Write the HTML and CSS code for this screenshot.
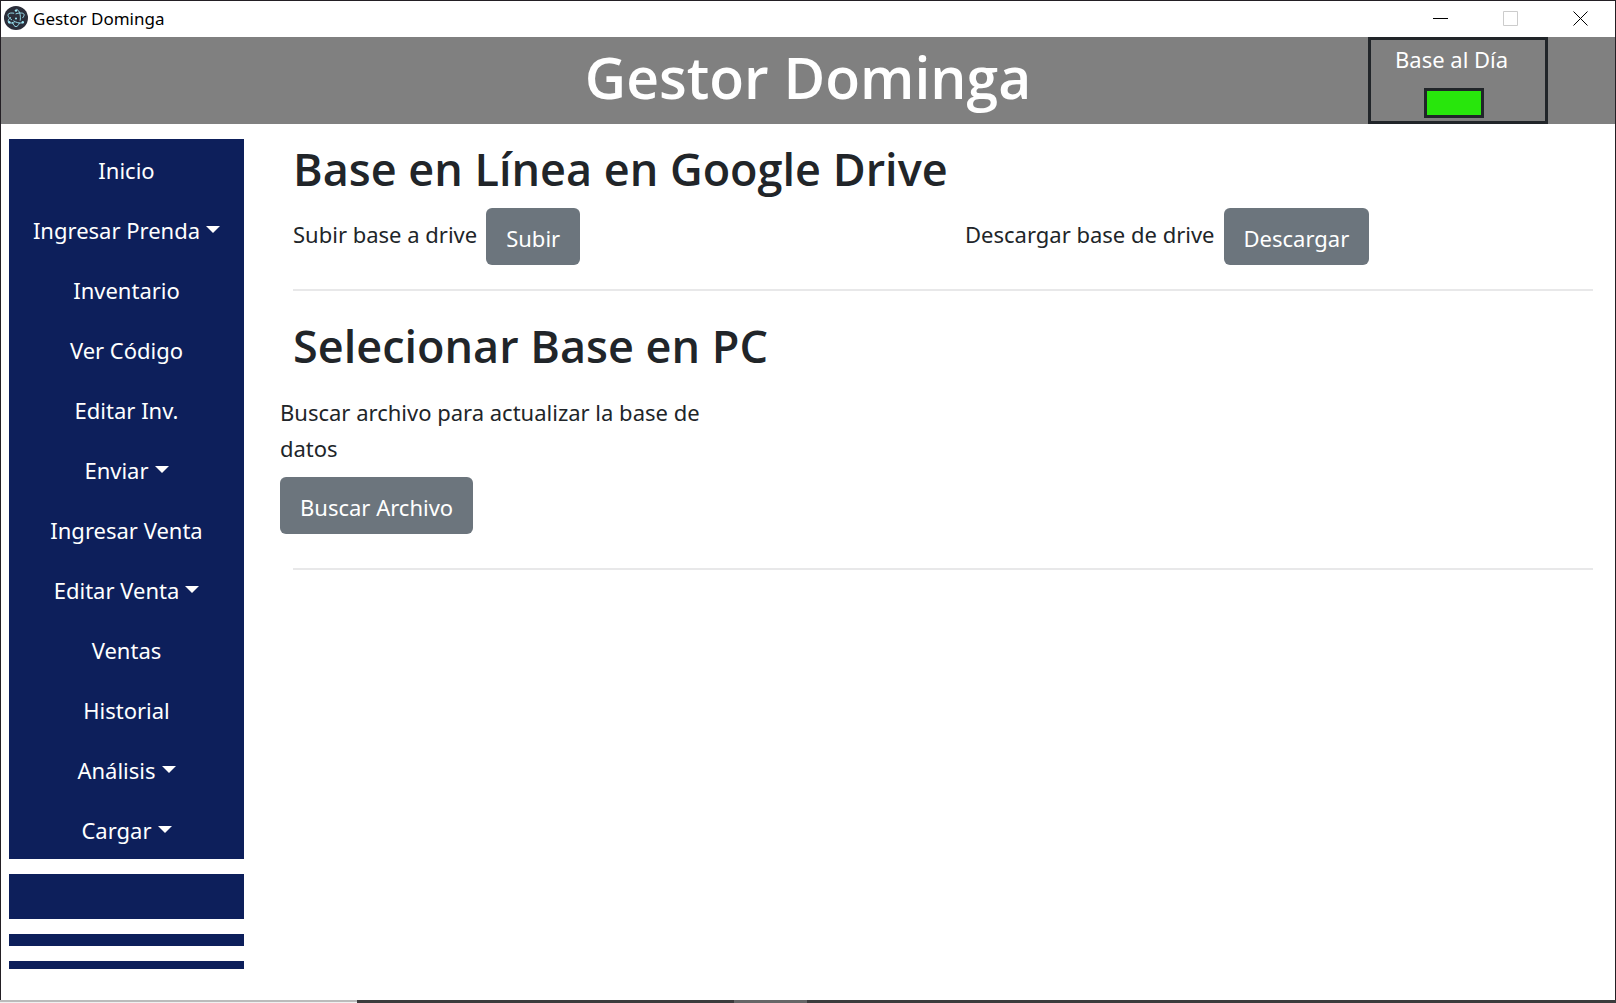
FILE: index.html
```html
<!DOCTYPE html>
<html lang="es">
<head>
<meta charset="utf-8">
<title>Gestor Dominga</title>
<link rel="stylesheet" href="styles.css">
</head>
<body>
<div class="window">
  <div class="titlebar">
    <svg class="app-icon" viewBox="0 0 24 24" aria-hidden="true">
      <circle cx="12" cy="12" r="12" fill="#2b2e3a"/>
      <g fill="none" stroke="#9feaf9" stroke-width="0.9" stroke-linecap="round">
        <path d="M9.800 7.200C7.100 6.700 4.900 7.100 4.200 8.300c-.8 1.400.7 3.600 3.500 5.500"/>
        <path d="M9.700 15c1.200.7 2.600 1.300 3.900 1.600 2.200.6 4.100.6 5.200.1"/>
        <path d="M6.500 11.400c-1.900 1.700-2.800 3.300-2.200 4.500.7 1.200 2.900 1.500 5.700.9"/>
        <path d="M12 7.800c1.400-.5 2.700-.8 3.900-.8 2.200-.1 3.700.3 4.100 1.300.4.900-.1 2.100-1.300 3.500"/>
        <path d="M8.400 16.400C9.300 19 10.600 20.600 12 20.600c1.300 0 2.500-1.300 3.400-3.500"/>
        <path d="M16.200 14.300c.2-.8.200-1.700.2-2.600 0-4.200-1.500-7.700-3.600-8.300"/>
      </g>
      <g fill="#9feaf9">
        <circle cx="12" cy="12.500" r="1"/>
        <circle cx="12" cy="4.600" r="1.200"/>
        <circle cx="5.300" cy="16.200" r="1.200"/>
        <circle cx="18.800" cy="16.200" r="1.200"/>
      </g>
    </svg>
    <span class="titlebar-text">Gestor Dominga</span>
    <div class="window-controls">
      <button type="button" aria-label="Minimizar"><svg viewBox="0 0 15 15"><path d="M0 7.500h15" stroke="#000"/></svg></button>
      <button type="button" aria-label="Maximizar" disabled><svg viewBox="0 0 15 15"><path d="M.5.500h14v14H.5z" stroke="#ccc" fill="none"/></svg></button>
      <button type="button" aria-label="Cerrar"><svg viewBox="0 0 15 15"><path d="M.5.500l14 14M14.500.500l-14 14" stroke="#000"/></svg></button>
    </div>
  </div>

  <header class="header">
    <h1>Gestor Dominga</h1>
    <div class="status">
      <span class="status-label">Base al Día</span>
      <span class="status-light"></span>
    </div>
  </header>

  <div class="layout">
    <aside class="sidebar">
      <nav class="menu">
        <a class="menu-item" href="#">Inicio</a>
        <button class="menu-item dropdown" type="button">Ingresar Prenda</button>
        <a class="menu-item" href="#">Inventario</a>
        <a class="menu-item" href="#">Ver Código</a>
        <a class="menu-item" href="#">Editar Inv.</a>
        <button class="menu-item dropdown" type="button">Enviar</button>
        <a class="menu-item" href="#">Ingresar Venta</a>
        <button class="menu-item dropdown" type="button">Editar Venta</button>
        <a class="menu-item" href="#">Ventas</a>
        <a class="menu-item" href="#">Historial</a>
        <button class="menu-item dropdown" type="button">Análisis</button>
        <button class="menu-item dropdown" type="button">Cargar</button>
      </nav>
      <div class="bar bar-large"></div>
      <div class="bar bar-medium"></div>
      <div class="bar bar-small"></div>
    </aside>

    <main class="content">
      <section class="section">
        <h2>Base en Línea en Google Drive</h2>
        <div class="drive-actions">
          <div class="action"><label for="subir">Subir base a drive</label><button class="btn" id="subir" type="button">Subir</button></div>
          <div class="action"><label for="descargar">Descargar base de drive</label><button class="btn" id="descargar" type="button">Descargar</button></div>
        </div>
      </section>
      <section class="section section-file">
        <h2>Selecionar Base en PC</h2>
        <div class="file-action">
          <label for="buscar">Buscar archivo para actualizar la base de datos</label>
          <button class="btn" id="buscar" type="button">Buscar Archivo</button>
        </div>
      </section>
    </main>
  </div>
</div>
<div class="desktop-edge"><span class="edge-light"></span><span class="edge-dark"></span><span class="edge-mid"></span><span class="edge-dark edge-rest"></span></div>
</body>
</html>
```
FILE: styles.css
```css
* {
  box-sizing: border-box;
}

body {
  margin: 0;
  min-height: 100vh;
  display: flex;
  flex-direction: column;
  font: 22px/36px "Noto Sans", "Open Sans", sans-serif;
  color: #212529;
  background: #fff;
}

button {
  font: inherit;
  border: 0;
  padding: 0;
  background: none;
  cursor: pointer;
}

.window {
  flex: 1;
  border: 1px solid #231f24;
  border-bottom: 0;
}

/* Title bar */
.titlebar {
  display: flex;
  align-items: center;
  height: 36px;
  padding-left: 3px;
}

.app-icon {
  width: 24px;
  height: 24px;
  margin-bottom: 2px;
}

.titlebar-text {
  margin-left: 5px;
  font-size: 17px;
  color: #000;
}

.window-controls {
  display: flex;
  align-self: flex-start;
  margin-left: auto;
}

.window-controls button {
  display: flex;
  align-items: center;
  justify-content: center;
  width: 70px;
  height: 35px;
}

.window-controls svg {
  width: 15px;
  height: 15px;
}

/* Header */
.header {
  display: grid;
  grid-template-columns: 1fr auto 1fr;
  height: 87px;
  color: #fff;
  background: #808080;
}

h1,
h2 {
  margin: 0;
  font-family: "Open Sans", "Noto Sans", sans-serif;
  font-weight: 600;
}

h1 {
  grid-column: 2;
  font-size: 57px;
  line-height: 80px;
}

.status {
  justify-self: end;
  display: flex;
  flex-direction: column;
  width: 180px;
  margin-right: 67px;
  padding: 1px 0 0 24px;
  border: 3px solid #212529;
}

.status-light {
  width: 60px;
  height: 30px;
  margin: 11px 0 0 29px;
  border: 3px solid #212529;
  background: #28e60c;
}

/* Sidebar */
.layout {
  display: flex;
  gap: 49px;
  padding: 15px 22px 31px 8px;
}

.sidebar {
  display: flex;
  flex-direction: column;
  flex: 0 0 235px;
  gap: 15px;
}

.menu {
  display: flex;
  flex-direction: column;
  background: #0d1f5b;
}

.menu-item {
  display: flex;
  align-items: center;
  justify-content: center;
  gap: 6px;
  height: 60px;
  padding-top: 2px;
  color: #fff;
  text-decoration: none;
}

.dropdown::after {
  content: "";
  margin-bottom: 2px;
  border: 7px solid transparent;
  border-top-color: #fff;
  border-bottom: 0;
}

.bar {
  background: #0d1f5b;
}

.bar-large {
  height: 45px;
}

.bar-medium {
  height: 12px;
}

.bar-small {
  height: 8px;
}

/* Content */
.content {
  flex: 1;
}

.section {
  padding-bottom: 24px;
  border-bottom: 2px solid #e8e8e9;
}

.section-file {
  padding: 25px 0 34px;
}

h2 {
  font-size: 45px;
  line-height: 60px;
}

.drive-actions {
  display: grid;
  grid-template-columns: 1fr 1fr;
  gap: 44px;
  margin-top: 9px;
}

.action {
  display: flex;
  gap: 9px;
  white-space: nowrap;
}

.action label {
  padding-top: 8px;
}

.btn {
  height: 57px;
  padding: 12px 20px 9px;
  border-radius: 6px;
  color: #fff;
  background: #6c757d;
}

.file-action {
  display: flex;
  flex-direction: column;
  align-items: flex-start;
  gap: 11px;
  width: 460px;
  margin: 18px 0 0 -13px;
}

/* Strip of the desktop below the window */
.desktop-edge {
  display: flex;
  height: 3px;
}

.edge-light {
  width: 357px;
  border-top: 2px solid #bbb;
  background: #f0f0f0;
}

.edge-dark {
  width: 377px;
  background: #3b3b3c;
}

.edge-mid {
  width: 73px;
  background: #666667;
}

.edge-rest {
  flex: 1;
}
```
